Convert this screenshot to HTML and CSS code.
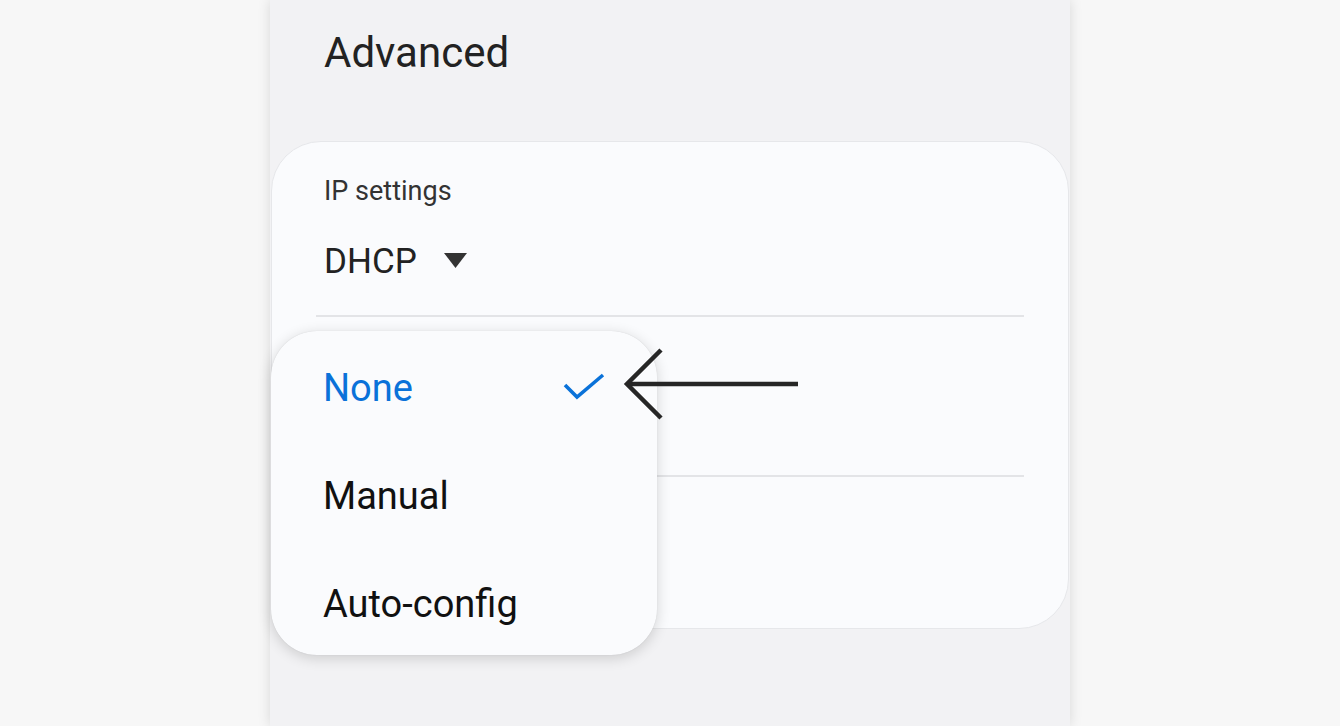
FILE: index.html
```html
<!DOCTYPE html>
<html lang="en">
<head>
    <meta charset="UTF-8">
    <meta name="viewport" content="width=device-width, initial-scale=1.0">
    <title>Advanced</title>
    <link rel="stylesheet" href="styles.css">
</head>
<body>
    <div class="screen">
        <header class="page-title">Advanced</header>

        <div class="card">
            <div class="section">
                <div class="label">IP settings</div>
                <div class="select">
                    <span>DHCP</span>
                    <svg class="caret" width="24" height="16" viewBox="0 0 24 16">
                        <path d="M0 0 H23 L11.5 15 Z" fill="#333"/>
                    </svg>
                </div>
            </div>
            <div class="section mid"></div>
            <div class="section last"></div>
        </div>

        <!-- open dropdown menu -->
        <div class="menu">
            <div class="menu-item selected">
                <span>None</span>
                <svg width="42" height="28" viewBox="0 0 42 28">
                    <path d="M2 12 L14 24 L40 2" fill="none" stroke="#0a72d9" stroke-width="3.6"/>
                </svg>
            </div>
            <div class="menu-item">Manual</div>
            <div class="menu-item">Auto-config</div>
        </div>

        <!-- annotation arrow -->
        <svg class="pointer" width="180" height="80" viewBox="0 0 180 80">
            <path d="M7 39 H177" stroke="#262626" stroke-width="4.5" fill="none"/>
            <path d="M40 5 L6 39 L40 73" stroke="#262626" stroke-width="4.5" fill="none"/>
        </svg>
    </div>
</body>
</html>
```

FILE: styles.css
```css
body {
    margin: 0;
    padding: 0;
    background-color: #f7f7f7;
    font-family: Roboto, "Noto Sans", sans-serif;
    overflow: hidden;
}
.screen {
    position: relative;
    width: 800px;
    height: 726px;
    margin: 0 auto;
    background-color: #f2f2f4;
    box-shadow: 0 0 12px rgba(0, 0, 0, 0.13);
}
.page-title {
    padding: 28px 0 0 54px;
    font-size: 42px;
    line-height: 49px;
    color: #222;
}
.card {
    margin: 64px 1px 0 1px;
    background-color: #fafbfd;
    border: 1px solid #e6e7ea;
    border-radius: 50px;
    padding: 0 44px;
    height: 488px;
    box-sizing: border-box;
}
.section {
    padding: 33px 8px 0 8px;
    height: 175px;
    box-sizing: border-box;
    border-bottom: 2px solid #e3e4e7;
}
.section.mid {
    height: 160px;
}
.section.last {
    border-bottom: none;
}
.label {
    font-size: 27px;
    line-height: 32px;
    color: #333;
}
.select {
    margin-top: 34px;
    display: flex;
    align-items: center;
    gap: 27px;
    font-size: 35px;
    line-height: 41px;
    color: #222;
}
.caret {
    margin-top: -2px;
}
.menu {
    position: absolute;
    left: 1px;
    top: 331px;
    width: 386px;
    height: 324px;
    box-sizing: border-box;
    background-color: #fafbfd;
    border-radius: 46px;
    box-shadow: 0 3px 14px rgba(0, 0, 0, 0.16), 0 0 1px rgba(0, 0, 0, 0.15);
    padding: 35px 52px 0 52px;
    display: flex;
    flex-direction: column;
    gap: 63px;
}
.menu-item {
    display: flex;
    align-items: center;
    justify-content: space-between;
    font-size: 38px;
    line-height: 45px;
    color: #111;
}
.menu-item.selected {
    color: #0a72d9;
}
.menu-item svg {
    margin-top: -4px;
}
.pointer {
    position: absolute;
    left: 351px;
    top: 345px;
}
```
